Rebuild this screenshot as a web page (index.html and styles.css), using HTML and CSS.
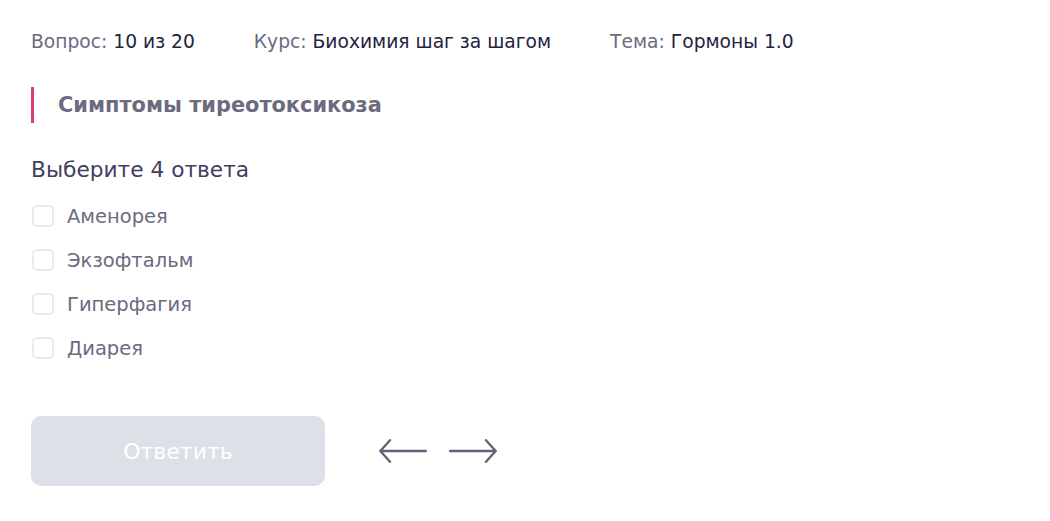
FILE: index.html
```html
<!DOCTYPE html>
<html lang="ru">
<head>
    <meta charset="UTF-8">
    <meta name="viewport" content="width=device-width, initial-scale=1.0">
    <title>Вопрос 10 из 20</title>
    <link rel="stylesheet" href="styles.css">
</head>
<body>
    <div class="quiz">
        <div class="meta">
            <span class="meta-item">Вопрос: <b>10 из 20</b></span>
            <span class="meta-item">Курс: <b>Биохимия шаг за шагом</b></span>
            <span class="meta-item">Тема: <b>Гормоны 1.0</b></span>
        </div>

        <h2 class="question">Симптомы тиреотоксикоза</h2>

        <p class="hint">Выберите 4 ответа</p>

        <form class="answers">
            <label class="answer"><input type="checkbox"><span class="box"></span>Аменорея</label>
            <label class="answer"><input type="checkbox"><span class="box"></span>Экзофтальм</label>
            <label class="answer"><input type="checkbox"><span class="box"></span>Гиперфагия</label>
            <label class="answer"><input type="checkbox"><span class="box"></span>Диарея</label>
        </form>

        <div class="actions">
            <button class="submit" disabled>Ответить</button>
            <div class="nav">
                <button class="nav-btn" aria-label="Назад">
                    <svg width="48" height="26" viewBox="0 0 48 26" fill="none" stroke="currentColor" stroke-width="2.4" stroke-linecap="round" stroke-linejoin="round">
                        <path d="M1.3 13H46.8M11 2.2L1.3 13L11 23.8"/>
                    </svg>
                </button>
                <button class="nav-btn" aria-label="Вперёд">
                    <svg width="48" height="26" viewBox="0 0 48 26" fill="none" stroke="currentColor" stroke-width="2.4" stroke-linecap="round" stroke-linejoin="round">
                        <path d="M46.7 13H1.2M37 2.2L46.7 13L37 23.8"/>
                    </svg>
                </button>
            </div>
        </div>
    </div>
</body>
</html>
```

FILE: styles.css
```css
:root {
    --text-muted: #6b6b80;
    --text-dark: #23233f;
    --accent: #dc4068;
    --box-border: #ebebef;
    --btn-disabled: #dde1e7;
    --arrow: #62627a;
}

body {
    margin: 0;
    font-family: 'DejaVu Sans', Inter, sans-serif;
    background: #ffffff;
    color: var(--text-muted);
}

.quiz {
    padding: 30px 31px;
}

.meta {
    display: flex;
    gap: 59px;
    font-size: 18.7px;
    line-height: 24px;
    color: var(--text-muted);
}

.meta b {
    font-weight: 400;
    color: var(--text-dark);
}

.question {
    margin: 33px 0 0;
    padding: 6px 0 6px 24px;
    border-left: 3px solid var(--accent);
    font-size: 20.9px;
    line-height: 24px;
    font-weight: 700;
    color: #6b6b7d;
}

.hint {
    margin: 33px 0 0;
    font-size: 21.7px;
    line-height: 28px;
    color: #3f4060;
}

.answers {
    display: flex;
    flex-direction: column;
    gap: 22px;
    margin-top: 21px;
}

.answer {
    display: flex;
    align-items: center;
    gap: 13px;
    height: 22px;
    font-size: 19.5px;
    color: var(--text-muted);
    cursor: pointer;
}

.answer input {
    display: none;
}

.box {
    box-sizing: border-box;
    width: 22px;
    height: 22px;
    margin-left: 1px;
    border: 2px solid var(--box-border);
    border-radius: 5px;
}

.actions {
    display: flex;
    align-items: center;
    gap: 54px;
    margin-top: 57px;
}

.submit {
    width: 294px;
    height: 70px;
    border: none;
    border-radius: 10px;
    background: var(--btn-disabled);
    color: #ffffff;
    font-family: inherit;
    font-size: 22px;
}

.nav {
    display: flex;
    gap: 22px;
}

.nav-btn {
    padding: 0;
    border: none;
    background: none;
    color: var(--arrow);
    display: flex;
    cursor: pointer;
}
```
